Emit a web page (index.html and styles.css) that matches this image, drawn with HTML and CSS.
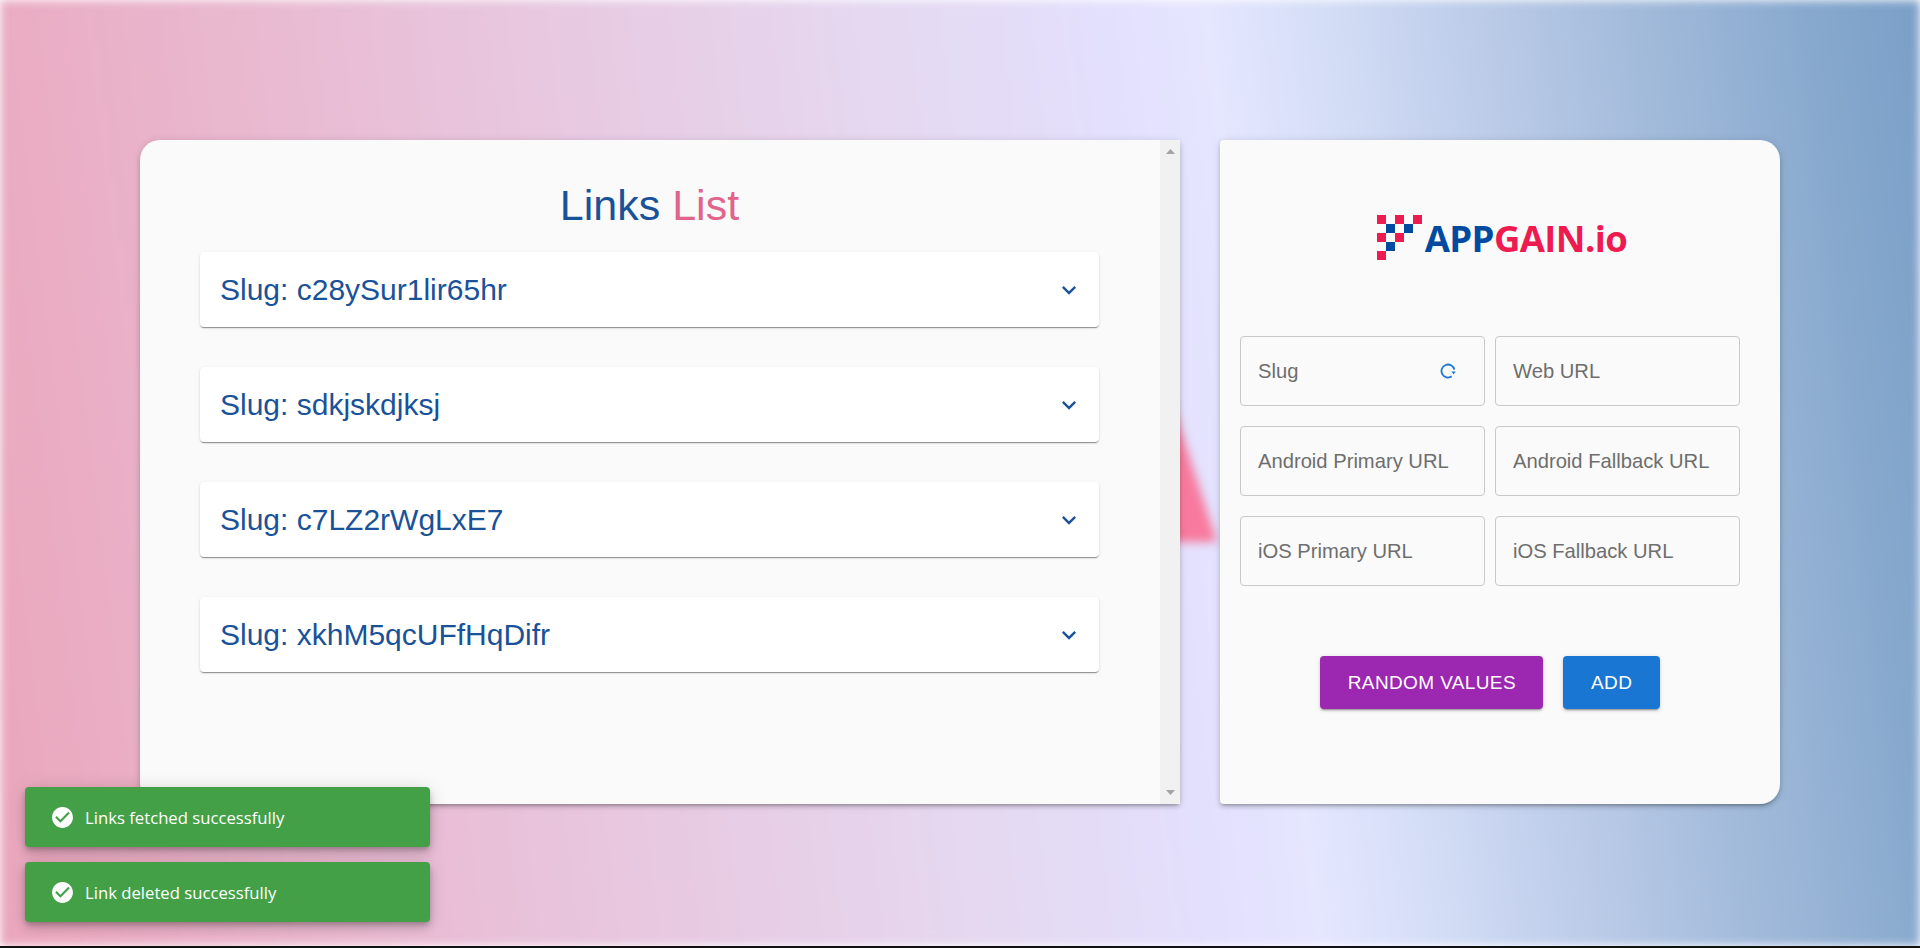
FILE: index.html
```html
<!DOCTYPE html>
<html lang="en">
<head>
<meta charset="utf-8">
<title>Links List</title>
<link rel="stylesheet" href="styles.css">
</head>
<body>
<main class="stage">
  <div class="backdrop"><div class="shard"></div></div>
  <div class="layout">
    <section class="card list-card">
      <div class="list-body">
        <h1 class="title"><span class="title-a">Links</span> <span class="title-b">List</span></h1>
        <div class="accordions">
          <div class="accordion"><span>Slug: c28ySur1lir65hr</span><svg class="chev" viewBox="0 0 24 24"><path d="M16.59 8.59 12 13.17 7.41 8.59 6 10l6 6 6-6z"/></svg></div>
          <div class="accordion"><span>Slug: sdkjskdjksj</span><svg class="chev" viewBox="0 0 24 24"><path d="M16.59 8.59 12 13.17 7.41 8.59 6 10l6 6 6-6z"/></svg></div>
          <div class="accordion"><span>Slug: c7LZ2rWgLxE7</span><svg class="chev" viewBox="0 0 24 24"><path d="M16.59 8.59 12 13.17 7.41 8.59 6 10l6 6 6-6z"/></svg></div>
          <div class="accordion"><span>Slug: xkhM5qcUFfHqDifr</span><svg class="chev" viewBox="0 0 24 24"><path d="M16.59 8.59 12 13.17 7.41 8.59 6 10l6 6 6-6z"/></svg></div>
        </div>
      </div>
      <div class="scrollbar">
        <svg class="arrow" viewBox="0 0 9 5"><path d="M4.500 0 9 5H0z"/></svg>
        <svg class="arrow" viewBox="0 0 9 5"><path d="M0 0h9L4.500 5z"/></svg>
      </div>
    </section>
    <section class="card form-card">
      <div class="logo">
        <svg class="logo-mark" viewBox="0 0 5 5" shape-rendering="crispEdges">
          <rect class="red" x="0" y="0" width="1" height="1"/><rect class="red" x="2" y="0" width="1" height="1"/><rect class="red" x="4" y="0" width="1" height="1"/>
          <rect class="blue" x="1" y="1" width="1" height="1"/><rect class="blue" x="3" y="1" width="1" height="1"/>
          <rect class="red" x="0" y="2" width="1" height="1"/><rect class="red" x="2" y="2" width="1" height="1"/>
          <rect class="blue" x="1" y="3" width="1" height="1"/>
          <rect class="red" x="0" y="4" width="1" height="1"/>
        </svg>
        <span class="logo-text"><span class="logo-app">APP</span><span class="logo-gain">GAIN.io</span></span>
      </div>
      <div class="fields">
        <div class="field"><span>Slug</span>
          <svg class="refresh" viewBox="0 0 16 16"><path d="M14.300 6.600A6.500 6.500 0 1 0 11.800 13.300" /><path class="refresh-tip" d="M11.500 8.400h4.200l-2.100 3z"/></svg>
        </div>
        <div class="field"><span>Web URL</span></div>
        <div class="field"><span>Android Primary URL</span></div>
        <div class="field"><span>Android Fallback URL</span></div>
        <div class="field"><span>iOS Primary URL</span></div>
        <div class="field"><span>iOS Fallback URL</span></div>
      </div>
      <div class="actions">
        <button class="btn btn-purple" type="button">RANDOM VALUES</button>
        <button class="btn btn-blue" type="button">ADD</button>
      </div>
    </section>
  </div>
  <div class="toasts">
    <div class="toast"><svg class="toast-icon" viewBox="0 0 24 24"><path d="M12 2C6.500 2 2 6.500 2 12S6.500 22 12 22 22 17.500 22 12 17.500 2 12 2M10 17L5 12L6.410 10.590L10 14.170L17.590 6.580L19 8L10 17Z"/></svg><span>Links fetched successfully</span></div>
    <div class="toast"><svg class="toast-icon" viewBox="0 0 24 24"><path d="M12 2C6.500 2 2 6.500 2 12S6.500 22 12 22 22 17.500 22 12 17.500 2 12 2M10 17L5 12L6.410 10.590L10 14.170L17.590 6.580L19 8L10 17Z"/></svg><span>Link deleted successfully</span></div>
  </div>
</main>
</body>
</html>
```
FILE: styles.css
```css
* { box-sizing: border-box; }
html, body { margin: 0; height: 948px; overflow: hidden; background: #111; }
body { font-family: "Liberation Sans", Arial, sans-serif; }

.stage { position: relative; height: 946px; background: #fff; overflow: hidden; }

.backdrop {
  position: absolute; inset: 0; filter: blur(5px);
  background: linear-gradient(83deg, #eaa6bc 0%, #e8c4dc 28%, #e5d8f0 48%, #e3e0fd 60%, #e5e6ff 65%, #d6dff7 70%, #c6d3ef 75%, #a9bfde 84%, #86a8cd 95%, #7a9fc7 100%);
}
.shard {
  position: absolute; left: 1100px; top: 180px; width: 120px; height: 362px;
  background: #f87a9e;
  clip-path: polygon(0 0, 117px 362px, 0 362px);
}

.layout { position: relative; display: flex; gap: 40px; padding: 140px 140px 0; }

.card {
  height: 664px; background: #fafafa;
  box-shadow: 0 3px 3px -2px rgba(0,0,0,.2), 0 3px 4px rgba(0,0,0,.14), 0 1px 8px rgba(0,0,0,.12);
}
.list-card { width: 1040px; display: flex; border-radius: 20px 4px 4px 20px; }
.list-body { flex: 1; min-width: 0; padding: 37px 61px 0 60px; }
.title {
  margin: 0 0 19px; font-size: 43px; line-height: 56px; font-weight: 400; text-align: center;
}
.title-a { color: #1a5299; }
.title-b { color: #e0648b; }

.accordions { display: flex; flex-direction: column; gap: 40px; }
.accordion {
  height: 75px; padding: 0 20px; display: flex; align-items: center; justify-content: space-between;
  background: #fff; border-radius: 4px; color: #1a5299; font-size: 30px;
  box-shadow: 0 2px 1px -1px rgba(0,0,0,.25), 0 1px 1px rgba(0,0,0,.18), 0 1px 3px rgba(0,0,0,.12);
}
.chev { width: 28px; height: 28px; fill: #1a5299; margin-right: -4px; }

.scrollbar {
  width: 20px; background: #f1f1f1; display: flex; flex-direction: column;
  justify-content: space-between; align-items: center; padding: 9px 0;
}
.arrow { width: 9px; height: 5px; fill: #a3a3a3; display: block; }

.form-card {
  width: 560px; display: flex; flex-direction: column; align-items: center;
  border-radius: 4px 20px 20px 4px; padding: 75px 40px 0 20px;
}
.logo { display: flex; height: 45px; gap: 3px; margin-left: 24px; margin-bottom: 76px; }
.logo-mark { width: 45px; height: 45px; flex: none; }
.red { fill: #ed1b50; }
.blue { fill: #004aa0; }
.logo-text {
  font-family: "Open Sans", sans-serif; font-weight: 700; font-size: 36.500px; line-height: 46px;
  letter-spacing: -.6px; white-space: nowrap;
}
.logo-app { color: #004aa0; }
.logo-gain { color: #ed1b50; }

.fields {
  width: 500px; display: grid; grid-template-columns: 244.5px 244.5px; grid-auto-rows: 70px; gap: 20px 10.500px;
}
.field {
  display: flex; align-items: center; justify-content: space-between; padding: 0 28px 0 17px;
  border: 1px solid #c9c9c9; border-radius: 4px; color: #6e6e6e; font-size: 20.200px; white-space: nowrap;
}
.refresh { width: 16px; height: 16px; fill: none; stroke: #1976d2; stroke-width: 1.800; }
.refresh-tip { fill: #1976d2; stroke: none; }

.actions { display: flex; gap: 20px; margin-top: 70px; }
.btn {
  height: 53px; padding: 0 27.500px; border: 0; border-radius: 4px; color: #fff;
  font-family: inherit; font-size: 19px; letter-spacing: .38px;
  box-shadow: 0 3px 1px -2px rgba(0,0,0,.2), 0 2px 2px rgba(0,0,0,.14), 0 1px 5px rgba(0,0,0,.12);
}
.btn-purple { background: #9c27b0; }
.btn-blue { background: #1976d2; }

.toasts {
  position: absolute; left: 25px; top: 787px; width: 405px;
  display: flex; flex-direction: column; gap: 15px;
}
.toast {
  height: 60px; padding: 0 24px 0 25px; display: flex; align-items: center; gap: 10px;
  background: #43a047; color: #fff; border-radius: 4px;
  font-family: "Open Sans", sans-serif; font-size: 16.700px;
  box-shadow: 0 3px 5px -1px rgba(0,0,0,.2), 0 6px 10px rgba(0,0,0,.14), 0 1px 18px rgba(0,0,0,.12);
}
.toast-icon { width: 25px; height: 25px; fill: #fff; flex: none; }
```
